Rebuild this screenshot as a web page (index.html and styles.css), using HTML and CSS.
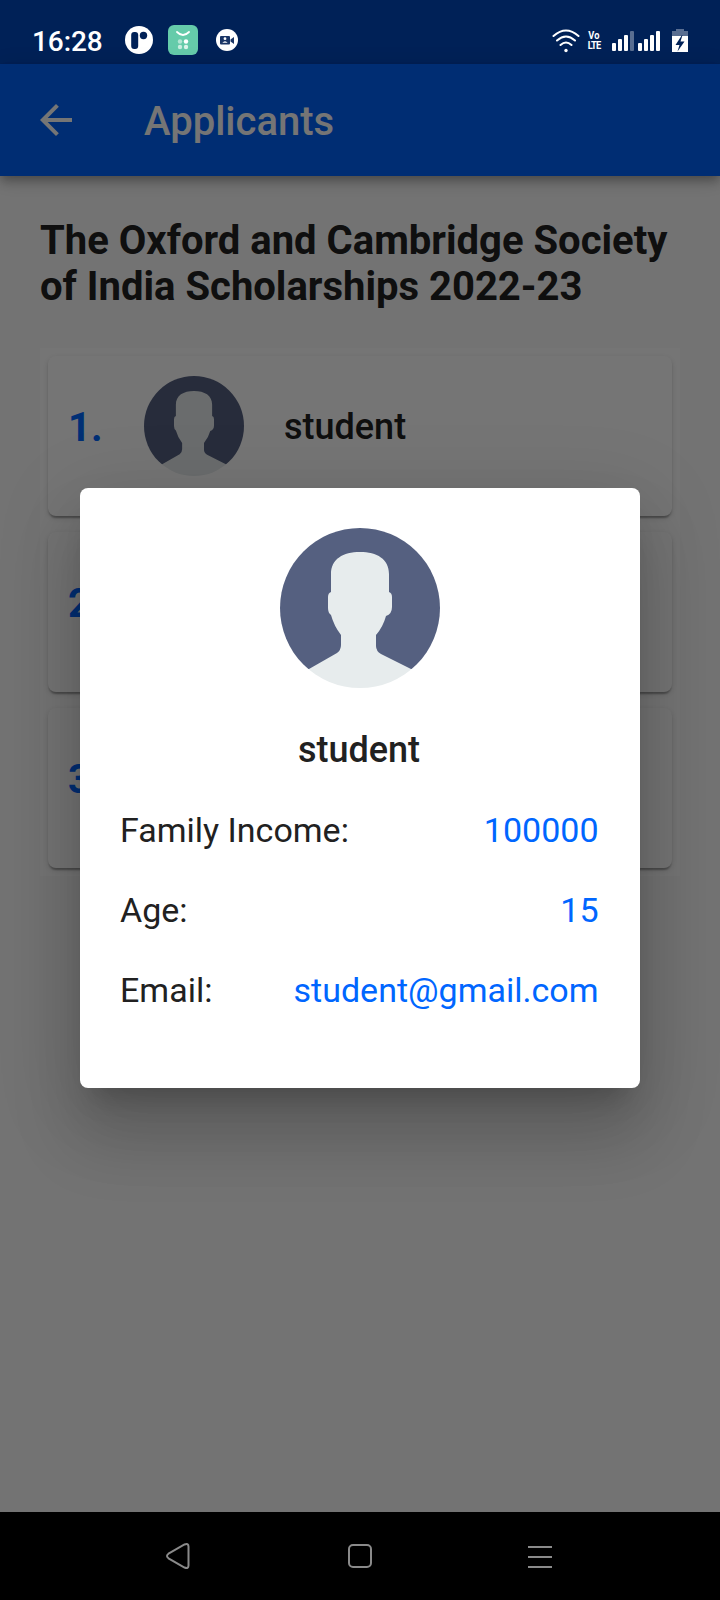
FILE: index.html
```html
<!DOCTYPE html>
<html lang="en">
<head>
<meta charset="utf-8">
<title>Applicants</title>
<link rel="stylesheet" href="styles.css">
</head>
<body>
<svg class="defs" aria-hidden="true">
  <symbol id="avatar" viewBox="0 0 160 160">
    <clipPath id="disc"><circle cx="80" cy="80" r="80"/></clipPath>
    <g clip-path="url(#disc)">
      <path fill="#556080" d="M0 0H160V141H0Z"/>
      <path fill="#e7eced" d="M51 46C51 31 63 24 80 24S109 31 109 46V64Q112 65 112 69V79Q112 86 106 88Q103 99 96 107V118Q96 123 101 126L131 141L140 160H20L29 141L57 125Q61 122 61 117V107Q54 98 51 87Q48 85 48 80V69Q48 65 51 64Z"/>
    </g>
  </symbol>
</svg>
<div class="phone">
  <header class="status">
    <span class="clock">16:28</span>
    <svg class="notifications" width="120" height="32" viewBox="0 0 120 32">
      <circle cx="15" cy="16" r="14" fill="#fff"/>
      <rect x="7.2" y="8" width="7" height="17" rx="3" fill="#002157"/>
      <circle cx="19.5" cy="11.5" r="3.7" fill="#002157"/>
      <rect x="44" y="1" width="30" height="30" rx="6" fill="#65cbaa"/>
      <path d="M53 8q6 6 12 0" stroke="#fff" stroke-width="1.8" fill="none" stroke-linecap="round"/>
      <circle cx="56" cy="17.5" r="2.2" fill="#b4e6d5"/><circle cx="62" cy="17.5" r="2.2" fill="#fff"/>
      <circle cx="56" cy="23" r="2.2" fill="#c9eee1"/><circle cx="62" cy="23" r="2.2" fill="#dcf5ec"/>
      <circle cx="103" cy="16" r="11" fill="#fff"/>
      <rect x="96" y="12" width="10" height="8.5" rx="1" fill="#1a3566"/>
      <path d="M106.500 15.500L110 13V20L106.500 17.500Z" fill="#1a3566"/>
      <circle cx="101" cy="14.700" r="1.400" fill="#fff"/><path d="M98.300 18.800q2.700-3.200 5.400 0z" fill="#fff"/>
    </svg>
    <svg class="signals" width="138" height="28" viewBox="0 0 138 28">
      <g fill="none" stroke="#fff" stroke-width="2" stroke-linecap="round">
        <path d="M1.500 8Q14-3 26.500 8M5 12.500Q14 4.500 23 12.500M8.500 17Q14 12 19.500 17"/>
      </g>
      <circle cx="14" cy="22.500" r="1.700" fill="#fff"/>
      <text class="volte" transform="scale(.86 1)"><tspan x="42.200" y="11.500">Vo</tspan><tspan x="41.700" y="21" class="lte">LTE</tspan></text>
      <g fill="#fff">
        <rect x="60" y="15" width="4" height="8" rx="1"/><rect x="66" y="11" width="4" height="12" rx="1"/><rect x="72" y="7" width="4" height="16" rx="1"/>
        <rect x="78" y="3" width="4" height="20" rx="1" opacity=".35"/>
        <rect x="86" y="15" width="4" height="8" rx="1"/><rect x="92" y="11" width="4" height="12" rx="1"/><rect x="98" y="7" width="4" height="16" rx="1"/><rect x="104" y="3" width="4" height="20" rx="1"/>
        <path d="M120 8H136V24H120Z"/>
        <path d="M120 8V3H124V1H132V3H136V8Z" opacity=".35"/>
      </g>
      <path d="M130 7L123.500 17H127.500L125.500 23.500L132.500 13.500H128.500L130.500 7Z" fill="#002157"/>
    </svg>
  </header>
  <div class="screen">
    <div class="appbar">
      <svg width="32" height="32" viewBox="4 4 16 16"><path fill="#fff" d="M20 11H7.830l5.590-5.590L12 4l-8 8 8 8 1.410-1.410L7.830 13H20v-2z"/></svg>
      <span class="appbar-title">Applicants</span>
    </div>
    <main class="content">
      <h1 class="heading">The Oxford and Cambridge Society<br>of India Scholarships 2022-23</h1>
      <div class="list">
        <div class="card"><span class="num">1.</span><svg class="thumb"><use href="#avatar"/></svg><span class="name">student</span></div>
        <div class="card"><span class="num">2.</span></div>
        <div class="card"><span class="num">3.</span></div>
      </div>
    </main>
    <div class="barrier">
      <section class="dialog">
        <svg class="portrait"><use href="#avatar"/></svg>
        <h2 class="dialog-name">student</h2>
        <div class="row"><span>Family Income:</span><span class="value">100000</span></div>
        <div class="row"><span>Age:</span><span class="value">15</span></div>
        <div class="row"><span>Email:</span><span class="value">student@gmail.com</span></div>
      </section>
    </div>
  </div>
  <nav class="navbar">
    <svg width="28" height="28" viewBox="0 0 28 28"><path d="M2.500 11.700L18.500 2.500Q22.500 1 22.500 4.500V23.500Q22.500 27 18.500 25.500L2.500 16.300Q-.500 14 2.500 11.700Z"/></svg>
    <svg width="28" height="28" viewBox="0 0 28 28"><rect x="3" y="3" width="22" height="22" rx="4"/></svg>
    <svg width="28" height="28" viewBox="0 0 28 28"><path d="M2 5H26M2 15H26M2 25H26"/></svg>
  </nav>
</div>
</body>
</html>
```
FILE: styles.css
```css
* { box-sizing: border-box; }
body { margin: 0; font-family: Roboto, sans-serif; color: #212121; }
.defs { position: absolute; width: 0; height: 0; }
.phone { width: 720px; height: 1600px; display: flex; flex-direction: column; overflow: hidden; }
.status { height: 64px; flex: none; background: #002157; color: #fff; display: flex; align-items: flex-start; padding: 24px 30px 0 32px; }
.clock { width: 92px; font-size: 28px; font-weight: 500; line-height: 36px; letter-spacing: -.1px; }
.notifications { flex: none; }
.signals { margin: 4px 0 0 auto; flex: none; }
.volte { font: 700 10.800px Roboto, sans-serif; fill: #fff; }
.lte { letter-spacing: -1px; }
.screen { position: relative; flex: 1; background: #fafafa; display: flex; flex-direction: column; }
.appbar { height: 112px; flex: none; background: #0062fb; color: #fff; display: flex; align-items: center; padding: 0 40px; gap: 72px; box-shadow: 0 4px 8px -2px rgba(0,0,0,.2), 0 8px 10px rgba(0,0,0,.14), 0 2px 20px rgba(0,0,0,.12); }
.appbar-title { padding-top: 2px; font-size: 40px; font-weight: 500; }
.content { padding: 42px 40px 0; }
.heading { margin: 0 0 38px; font-size: 40px; font-weight: 700; line-height: 46px; white-space: nowrap; }
.list { background: #fff; padding: 8px; display: flex; flex-direction: column; gap: 16px; }
.card { height: 160px; border-radius: 8px; background: #fff; display: flex; align-items: center; padding: 0 20px 20px; box-shadow: 0 4px 2px -2px rgba(0,0,0,.2), 0 2px 2px rgba(0,0,0,.14), 0 2px 6px rgba(0,0,0,.12); }
.num { width: 76px; padding-top: 2px; color: #0066ff; font-size: 40px; font-weight: 700; }
.thumb { width: 100px; height: 100px; }
.name { margin-left: 40px; padding-top: 2px; font-size: 36px; font-weight: 500; }
.barrier { position: absolute; inset: 0; background: rgba(0,0,0,.54); display: flex; align-items: center; justify-content: center; }
.dialog { width: 560px; height: 600px; border-radius: 8px; background: #fff; padding: 40px; display: flex; flex-direction: column; box-shadow: 0 22px 26px -14px rgba(0,0,0,.2), 0 48px 66px 6px rgba(0,0,0,.14), 0 18px 80px 12px rgba(0,0,0,.1); }
.portrait { width: 160px; height: 160px; align-self: center; flex: none; }
.dialog-name { margin: 41px 2px 19px 0; font-size: 36px; font-weight: 500; line-height: 42px; text-align: center; }
.row { height: 80px; display: flex; justify-content: space-between; align-items: center; font-size: 34px; padding-right: 1.500px; }
.value { color: #0066ff; }
.navbar { height: 88px; flex: none; background: #000; display: flex; align-items: center; justify-content: space-around; padding: 0 90px; }
.navbar svg { fill: none; stroke: #8a8a8a; stroke-width: 2; }
```
